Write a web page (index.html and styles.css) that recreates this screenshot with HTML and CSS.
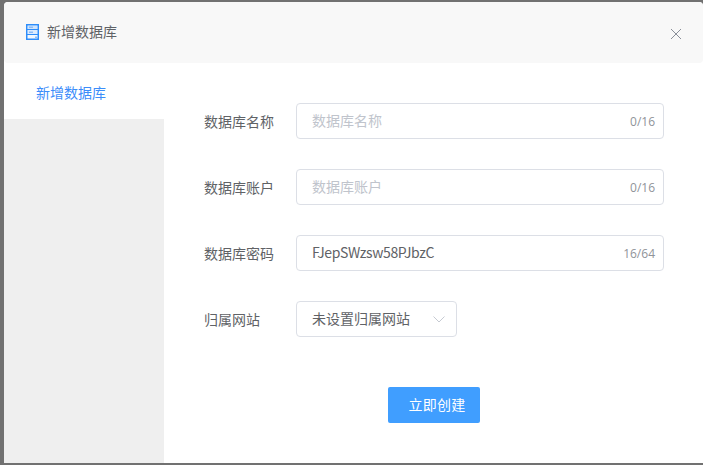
FILE: index.html
```html
<!DOCTYPE html>
<html lang="zh">
<head>
<meta charset="utf-8">
<title>新增数据库</title>
<link rel="stylesheet" href="styles.css">
</head>
<body>
<div class="modal">
  <header class="head">
    <div class="title">
      <svg class="db-icon" width="13" height="16" viewBox="0 0 13 16">
        <rect x="0.750" y="0.750" width="11.500" height="14.500" fill="#f2f8ff" stroke="#2e8dfa" stroke-width="1.500"/>
        <path d="M1 5.500H12M1 10.500H12" stroke="#2e8dfa"/>
        <rect x="2" y="2" width="9" height="3" fill="#cfe4fd"/>
        <rect x="2" y="6" width="9" height="4" fill="#dcebfe"/>
        <rect x="3" y="2.500" width="4" height="1.500" fill="#8dbdf8"/>
        <rect x="3" y="7.500" width="4" height="1.500" fill="#8dbdf8"/>
        <rect x="9" y="12.500" width="2" height="1.500" fill="#8dbdf8"/>
      </svg>
      <span>新增数据库</span>
    </div>
    <svg class="close" width="12" height="12" viewBox="0 0 12 12">
      <path d="M1 1L11 11M11 1L1 11" stroke="#8a8f99" stroke-width="1" fill="none"/>
    </svg>
  </header>
  <div class="body">
    <aside class="side">
      <div class="tab">新增数据库</div>
      <div class="side-rest"></div>
    </aside>
    <main class="main">
      <div class="row">
        <label class="label">数据库名称</label>
        <div class="field"><input class="input" placeholder="数据库名称"><span class="count">0/16</span></div>
      </div>
      <div class="row">
        <label class="label">数据库账户</label>
        <div class="field"><input class="input" placeholder="数据库账户"><span class="count">0/16</span></div>
      </div>
      <div class="row">
        <label class="label">数据库密码</label>
        <div class="field"><input class="input input-latin" value="FJepSWzsw58PJbzC"><span class="count">16/64</span></div>
      </div>
      <div class="row">
        <label class="label">归属网站</label>
        <div class="select">
          <span class="select-text">未设置归属网站</span>
          <svg width="12" height="7" viewBox="0 0 12 7"><path d="M0.5 0.500L6 6L11.500 0.500" stroke="#c6cad2" fill="none"/></svg>
        </div>
      </div>
      <div class="actions"><button class="btn">立即创建</button></div>
    </main>
  </div>
</div>
</body>
</html>
```

FILE: styles.css
```css
* { box-sizing: border-box; }
html, body { margin: 0; height: 100%; overflow: hidden; }
body {
  background: #717171;
  padding: 2px 0 2px 4px;
  font-family: "Noto Sans CJK SC", "Liberation Sans", sans-serif;
  font-size: 14px;
  color: #606266;
}
.modal {
  height: 461px;
  background: #fff;
  border-radius: 4px 4px 0 0;
  display: flex;
  flex-direction: column;
}
.head {
  height: 61px;
  flex: none;
  background: #f8f8f8;
  border-radius: 4px;
  display: flex;
  align-items: center;
  justify-content: space-between;
  padding: 0 21px 0 22px;
}
.title { display: flex; align-items: center; gap: 8px; color: #5f6266; margin-top: -3px; }
.db-icon { display: block; margin-top: 1px; }
.close { display: block; margin-top: 2px; }
.body { flex: 1; display: flex; min-height: 0; }
.side { width: 160px; flex: none; display: flex; flex-direction: column; }
.tab { height: 56px; padding: 19px 0 0 32px; line-height: 20px; color: #3c8dfa; background: #fff; }
.side-rest { flex: 1; background: #efefef; }
.main { flex: 1; padding: 40px 0 0 40px; }
.row { display: flex; align-items: center; height: 36px; margin-bottom: 30px; }
.label { width: 92px; flex: none; }
.field {
  width: 368px;
  height: 36px;
  border: 1px solid #dcdfe6;
  border-radius: 4px;
  display: flex;
  align-items: center;
  padding: 0 8px 0 15px;
}
.input {
  flex: 1;
  min-width: 0;
  border: 0;
  outline: 0;
  padding: 0 0 3px;
  background: transparent;
  font: inherit;
  color: #606266;
}
.input-latin { padding-bottom: 2px; letter-spacing: -0.375px; }
.input::placeholder { color: #c0c4cc; opacity: 1; }
.count { font-size: 12px; color: #909399; font-family: "Open Sans", "Liberation Sans", sans-serif; }
.select {
  width: 161px;
  height: 36px;
  border: 1px solid #dcdfe6;
  border-radius: 4px;
  display: flex;
  align-items: center;
  justify-content: space-between;
  padding: 0 11px 0 15px;
}
.select-text { margin-top: -2px; }
.actions { padding: 20px 0 0 184px; }
.btn {
  display: block;
  width: 92px;
  height: 36px;
  border: 0;
  border-radius: 2px;
  background: #409eff;
  color: #fff;
  font: inherit;
  letter-spacing: 0.25px;
  padding: 0 0 2px 6px;
}
```
